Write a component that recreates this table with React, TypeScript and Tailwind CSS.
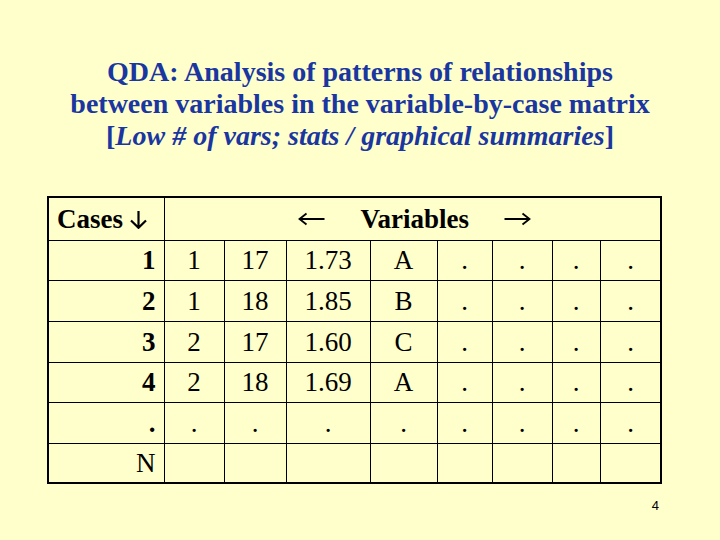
const serif = { fontFamily: '"Liberation Serif", "Times New Roman", serif' };

const rows = [
  { label: '1', bold: true, cells: ['1', '17', '1.73', 'A', '.', '.', '.', '.'], h: 'h-[40px]' },
  { label: '2', bold: true, cells: ['1', '18', '1.85', 'B', '.', '.', '.', '.'], h: 'h-[41px]' },
  { label: '3', bold: true, cells: ['2', '17', '1.60', 'C', '.', '.', '.', '.'], h: 'h-[41px]' },
  { label: '4', bold: true, cells: ['2', '18', '1.69', 'A', '.', '.', '.', '.'], h: 'h-[40px]' },
  { label: '.', bold: true, cells: ['.', '.', '.', '.', '.', '.', '.', '.'], h: 'h-[41px]' },
  { label: 'N', bold: false, cells: ['', '', '', '', '', '', '', ''], h: 'h-[40px]' },
];

const colWidths = ['w-[116px]', 'w-[60px]', 'w-[62px]', 'w-[84px]', 'w-[67px]', 'w-[55px]', 'w-[60px]', 'w-[48px]', 'w-[61px]'];

function Arrow({ dir }: { dir: 'left' | 'right' }) {
  return (
    <svg width="27" height="14" viewBox="0 0 27 14" className={dir === 'right' ? 'rotate-180' : ''}>
      <path d="M1.5 7 H26.5 M8.5 1.5 L1.5 7 L8.5 12.5" fill="none" stroke="black" strokeWidth="1.8" strokeLinejoin="miter" />
    </svg>
  );
}

function DownArrow() {
  return (
    <svg width="19" height="18" viewBox="0 0 19 18" className="inline-block ml-[6px] align-[-1px]">
      <path d="M9.5 0 V16.5 M2 9.5 L9.5 16.8 L17 9.5" fill="none" stroke="black" strokeWidth="2.2" />
    </svg>
  );
}

export default function App() {
  return (
    <div className="w-[720px] h-[540px] bg-[#ffffcc] flex flex-col overflow-hidden" style={serif}>
      {/* title */}
      <div className="pt-[56px] text-center font-bold text-[28px] leading-[32px] text-[#1a36a0]">
        <div>QDA: Analysis of patterns of relationships</div>
        <div>between variables in the variable-by-case matrix</div>
        <div>
          [<span className="italic">Low # of vars; stats / graphical summaries</span>]
        </div>
      </div>

      {/* variable-by-case matrix */}
      <table className="mt-[44px] ml-[47px] w-[613px] table-fixed border-collapse border-2 border-black text-[27px] leading-[30px] text-black">
        <colgroup>
          {colWidths.map((w, i) => (
            <col key={i} className={w} />
          ))}
        </colgroup>
        <tbody>
          <tr className="h-[43px]">
            <td className="border border-black pl-[8px] text-left font-bold whitespace-nowrap">
              Cases
              <DownArrow />
            </td>
            <td colSpan={9} className="border border-black">
              <div className="flex justify-center items-center gap-[35px] pl-[5px]">
                <Arrow dir="left" />
                <span className="font-bold">Variables</span>
                <Arrow dir="right" />
              </div>
            </td>
          </tr>
          {rows.map((r) => (
            <tr key={r.label} className={r.h}>
              <td className={`border border-black pr-[8px] text-right ${r.bold ? 'font-bold' : ''}`}>{r.label}</td>
              {r.cells.map((c, i) => (
                <td key={i} className="border border-black text-center">
                  {c}
                </td>
              ))}
            </tr>
          ))}
        </tbody>
      </table>

      {/* slide number */}
      <div className="mt-[14px] pr-[61px] flex justify-end text-[13px] leading-[15px] text-black" style={{ fontFamily: '"Liberation Sans", Arial, sans-serif' }}>
        4
      </div>
    </div>
  );
}
